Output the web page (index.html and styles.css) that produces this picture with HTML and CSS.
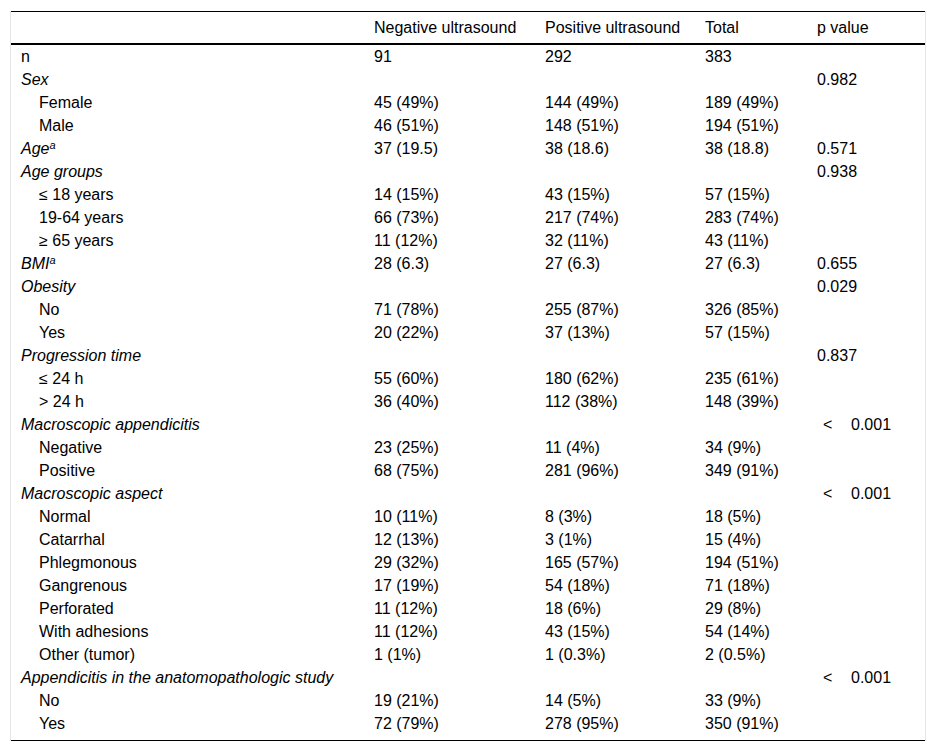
FILE: index.html
```html
<!DOCTYPE html>
<html>
<head>
<meta charset="utf-8">
<link rel="stylesheet" href="styles.css">
</head>
<body>
<div class="wrap">
<table class="tbl">
<colgroup>
<col class="c1"><col class="c2"><col class="c3"><col class="c4"><col class="c5">
</colgroup>
<thead>
<tr><th></th><th>Negative ultrasound</th><th>Positive ultrasound</th><th>Total</th><th>p value</th></tr>
</thead>
<tbody>
<tr><td>n</td><td>91</td><td>292</td><td>383</td><td></td></tr>
<tr><td class="cat">Sex</td><td></td><td></td><td></td><td>0.982</td></tr>
<tr><td class="sub">Female</td><td>45 (49%)</td><td>144 (49%)</td><td>189 (49%)</td><td></td></tr>
<tr><td class="sub">Male</td><td>46 (51%)</td><td>148 (51%)</td><td>194 (51%)</td><td></td></tr>
<tr><td class="cat">Age<sup>a</sup></td><td>37 (19.5)</td><td>38 (18.6)</td><td>38 (18.8)</td><td>0.571</td></tr>
<tr><td class="cat">Age groups</td><td></td><td></td><td></td><td>0.938</td></tr>
<tr><td class="sub">≤ 18 years</td><td>14 (15%)</td><td>43 (15%)</td><td>57 (15%)</td><td></td></tr>
<tr><td class="sub">19-64 years</td><td>66 (73%)</td><td>217 (74%)</td><td>283 (74%)</td><td></td></tr>
<tr><td class="sub">≥ 65 years</td><td>11 (12%)</td><td>32 (11%)</td><td>43 (11%)</td><td></td></tr>
<tr><td class="cat">BMI<sup>a</sup></td><td>28 (6.3)</td><td>27 (6.3)</td><td>27 (6.3)</td><td>0.655</td></tr>
<tr><td class="cat">Obesity</td><td></td><td></td><td></td><td>0.029</td></tr>
<tr><td class="sub">No</td><td>71 (78%)</td><td>255 (87%)</td><td>326 (85%)</td><td></td></tr>
<tr><td class="sub">Yes</td><td>20 (22%)</td><td>37 (13%)</td><td>57 (15%)</td><td></td></tr>
<tr><td class="cat">Progression time</td><td></td><td></td><td></td><td>0.837</td></tr>
<tr><td class="sub">≤ 24 h</td><td>55 (60%)</td><td>180 (62%)</td><td>235 (61%)</td><td></td></tr>
<tr><td class="sub">&gt; 24 h</td><td>36 (40%)</td><td>112 (38%)</td><td>148 (39%)</td><td></td></tr>
<tr><td class="cat">Macroscopic appendicitis</td><td></td><td></td><td></td><td><span class="lt">&lt;</span>0.001</td></tr>
<tr><td class="sub">Negative</td><td>23 (25%)</td><td>11 (4%)</td><td>34 (9%)</td><td></td></tr>
<tr><td class="sub">Positive</td><td>68 (75%)</td><td>281 (96%)</td><td>349 (91%)</td><td></td></tr>
<tr><td class="cat">Macroscopic aspect</td><td></td><td></td><td></td><td><span class="lt">&lt;</span>0.001</td></tr>
<tr><td class="sub">Normal</td><td>10 (11%)</td><td>8 (3%)</td><td>18 (5%)</td><td></td></tr>
<tr><td class="sub">Catarrhal</td><td>12 (13%)</td><td>3 (1%)</td><td>15 (4%)</td><td></td></tr>
<tr><td class="sub">Phlegmonous</td><td>29 (32%)</td><td>165 (57%)</td><td>194 (51%)</td><td></td></tr>
<tr><td class="sub">Gangrenous</td><td>17 (19%)</td><td>54 (18%)</td><td>71 (18%)</td><td></td></tr>
<tr><td class="sub">Perforated</td><td>11 (12%)</td><td>18 (6%)</td><td>29 (8%)</td><td></td></tr>
<tr><td class="sub">With adhesions</td><td>11 (12%)</td><td>43 (15%)</td><td>54 (14%)</td><td></td></tr>
<tr><td class="sub">Other (tumor)</td><td>1 (1%)</td><td>1 (0.3%)</td><td>2 (0.5%)</td><td></td></tr>
<tr><td class="cat">Appendicitis in the anatomopathologic study</td><td></td><td></td><td></td><td><span class="lt">&lt;</span>0.001</td></tr>
<tr><td class="sub">No</td><td>19 (21%)</td><td>14 (5%)</td><td>33 (9%)</td><td></td></tr>
<tr class="last"><td class="sub">Yes</td><td>72 (79%)</td><td>278 (95%)</td><td>350 (91%)</td><td></td></tr>
</tbody>
</table>
</div>
</body>
</html>
```

FILE: styles.css
```css
html, body {
  margin: 0;
  padding: 0;
  background: #fff;
}
body {
  padding: 11px 10px 0 10px;
  font-family: "Liberation Sans", Arial, sans-serif;
  font-size: 16px;
  color: #000;
}
.wrap {
  width: 914px;
  border-left: 1px solid #e6e6e6;
  border-right: 1px solid #e6e6e6;
}
.tbl {
  width: 914px;
  table-layout: fixed;
  border-collapse: collapse;
  border-top: 1px solid #000;
  border-bottom: 1px solid #000;
}
.c1 { width: 353px; }
.c2 { width: 171px; }
.c3 { width: 160px; }
.c4 { width: 112px; }
.c5 { width: 118px; }
th {
  font-weight: normal;
  text-align: left;
  padding: 7px 10px 6px 10px;
  line-height: 18px;
  border-bottom: 2px solid #000;
}
td {
  padding: 3px 10px 2px 10px;
  line-height: 18px;
  white-space: nowrap;
  vertical-align: top;
}
.last td {
  padding-bottom: 7px;
}
.cat {
  font-style: italic;
}
.sub {
  padding-left: 28px;
}
sup {
  font-size: 11px;
  line-height: 0;
  vertical-align: 5px;
}
.lt {
  display: inline-block;
  width: 34px;
  padding-left: 6px;
  box-sizing: border-box;
}
```
